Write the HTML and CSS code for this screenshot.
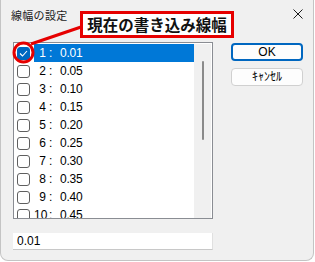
FILE: index.html
```html
<!DOCTYPE html>
<html lang="ja">
<head>
    <meta charset="UTF-8">
    <title>線幅の設定</title>
    <link rel="stylesheet" href="styles.css">
</head>
<body>
    <div class="dialog">
        <div class="titlebar">
            <span class="title">線幅の設定</span>
            <svg class="close" width="10" height="10" viewBox="0 0 10 10">
                <path d="M0.5 0.5 L9.5 9.5 M9.5 0.5 L0.5 9.5" stroke="#1b1b1b" stroke-width="1" fill="none"/>
            </svg>
        </div>
        <div class="content">
            <div class="main">
                <div class="listbox">
                    <div class="rows">
                        <div class="row selected"><span class="check on"><svg width="9" height="7" viewBox="0 0 9 7"><path d="M1 3.5 L3.5 6 L8 1" stroke="#fff" stroke-width="1.1" fill="none"/></svg></span><span class="label"><span class="num">1</span><span class="colon">:</span><span class="val">0.01</span></span></div>
                        <div class="row"><span class="check"></span><span class="label"><span class="num">2</span><span class="colon">:</span><span class="val">0.05</span></span></div>
                        <div class="row"><span class="check"></span><span class="label"><span class="num">3</span><span class="colon">:</span><span class="val">0.10</span></span></div>
                        <div class="row"><span class="check"></span><span class="label"><span class="num">4</span><span class="colon">:</span><span class="val">0.15</span></span></div>
                        <div class="row"><span class="check"></span><span class="label"><span class="num">5</span><span class="colon">:</span><span class="val">0.20</span></span></div>
                        <div class="row"><span class="check"></span><span class="label"><span class="num">6</span><span class="colon">:</span><span class="val">0.25</span></span></div>
                        <div class="row"><span class="check"></span><span class="label"><span class="num">7</span><span class="colon">:</span><span class="val">0.30</span></span></div>
                        <div class="row"><span class="check"></span><span class="label"><span class="num">8</span><span class="colon">:</span><span class="val">0.35</span></span></div>
                        <div class="row"><span class="check"></span><span class="label"><span class="num">9</span><span class="colon">:</span><span class="val">0.40</span></span></div>
                        <div class="row"><span class="check"></span><span class="label"><span class="num">10</span><span class="colon">:</span><span class="val">0.45</span></span></div>
                    </div>
                    <div class="scrollbar"><div class="thumb"></div></div>
                </div>
                <div class="buttons">
                    <button class="btn default">OK</button>
                    <button class="btn">ｷｬﾝｾﾙ</button>
                </div>
            </div>
            <input class="field" type="text" value="0.01">
        </div>

        <svg class="marks" width="315" height="262" viewBox="0 0 315 262">
            <line x1="81" y1="27" x2="31" y2="44" stroke="#e60000" stroke-width="3"/>
            <circle cx="23.5" cy="52.5" r="9.5" stroke="#e60000" stroke-width="3" fill="none"/>
        </svg>
        <div class="callout">現在の書き込み線幅</div>
    </div>
</body>
</html>
```

FILE: styles.css
```css
html, body {
    margin: 0;
    background: #ffffff;
}
.dialog {
    position: relative;
    box-sizing: border-box;
    width: 314px;
    height: 261px;
    background: #f0f0f0;
    border: 1px solid #c4c4c4;
    border-top: none;
    border-radius: 0 0 8px 8px;
    font-family: "Liberation Sans Narrow", "Liberation Sans", sans-serif;
    font-size: 12px;
    color: #000;
}
.titlebar {
    display: flex;
    align-items: center;
    justify-content: space-between;
    height: 31px;
    padding: 0 10px 2px 10px;
    box-sizing: border-box;
}
.title {
    font-family: "Noto Sans CJK JP", sans-serif;
    font-size: 11px;
    color: #1b1b1b;
    letter-spacing: 0.3px;
}
.close {
    display: block;
    margin-top: -2px;
}
.content {
    padding: 11px 0 0 12px;
}
.main {
    display: flex;
    align-items: flex-start;
}
.listbox {
    display: flex;
    box-sizing: border-box;
    width: 200px;
    height: 177px;
    border: 1px solid #8a8d93;
    background: #fff;
    padding: 1px 0 0 0;
    overflow: hidden;
}
.rows {
    width: 180px;
}
.row {
    display: flex;
    align-items: center;
    height: 18px;
}
.check {
    box-sizing: border-box;
    width: 13px;
    height: 13px;
    margin: 0 4px 0 3px;
    border: 1px solid #5f5f5f;
    border-radius: 3px;
    background: #fff;
    display: flex;
    align-items: center;
    justify-content: center;
}
.check.on {
    background: #0067c0;
    border-color: #0067c0;
}
.label {
    display: flex;
    align-items: center;
    flex: 1;
    height: 18px;
}
.row.selected .label {
    background: #0078d7;
    color: #fff;
}
.num {
    width: 12px;
    text-align: right;
}
.colon {
    margin-left: 3px;
    width: 11px;
}
.val {
    letter-spacing: -0.2px;
}
.scrollbar {
    width: 17px;
    background: #f0f0f0;
    display: flex;
    justify-content: center;
    padding-top: 17px;
    box-sizing: border-box;
}
.thumb {
    width: 2px;
    height: 79px;
    border-radius: 1px;
    background: #8a8a8a;
}
.buttons {
    display: flex;
    flex-direction: column;
    gap: 7px;
    margin-left: 18px;
    margin-top: 1px;
}
.btn {
    box-sizing: border-box;
    width: 72px;
    height: 18px;
    padding: 0;
    border: 1px solid #d0d0d0;
    border-radius: 4px;
    background: #fdfdfd;
    font-family: "Liberation Sans", "Noto Sans CJK JP", sans-serif;
    font-weight: normal;
    font-size: 12px;
    line-height: 16px;
    color: #000;
}
.btn.default {
    border: 2px solid #0067c0;
    line-height: 14px;
}
.field {
    display: block;
    box-sizing: border-box;
    width: 200px;
    height: 17px;
    margin-top: 14px;
    padding: 0 4px;
    border: none;
    border-bottom: 1px solid #c8c8c8;
    border-right: 1px solid #e0e0e0;
    background: #fff;
    font-family: "Liberation Sans Narrow", "Liberation Sans", sans-serif;
    font-size: 12px;
    color: #000;
}
.marks {
    position: absolute;
    left: -1px;
    top: 0;
    pointer-events: none;
}
.callout {
    position: absolute;
    left: 79px;
    top: 11px;
    box-sizing: border-box;
    width: 154px;
    height: 27px;
    border: 3px solid #e60000;
    background: #fff;
    font-family: "Noto Sans CJK JP", sans-serif;
    font-weight: bold;
    font-size: 15.5px;
    line-height: 20px;
    text-align: center;
    color: #111;
}
```
